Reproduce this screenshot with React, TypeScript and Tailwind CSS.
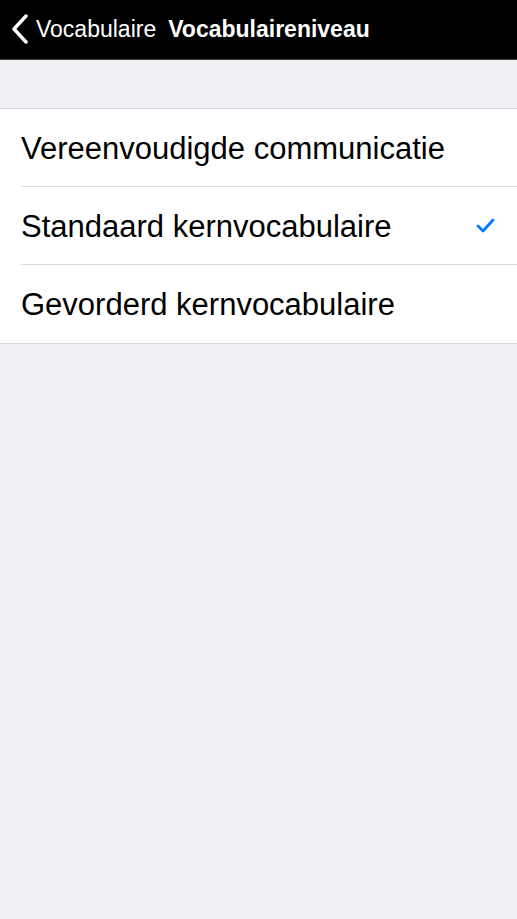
const items = [
  { label: 'Vereenvoudigde communicatie', checked: false },
  { label: 'Standaard kernvocabulaire', checked: true },
  { label: 'Gevorderd kernvocabulaire', checked: false },
];

export default function App() {
  return (
    <div className="min-h-[919px] bg-[#efeff4] font-['Liberation_Sans',Arial,sans-serif]">
      <div className="flex h-[60px] items-center border-b border-[#3a3a3c] bg-black text-white">
        <svg width="18" height="30" viewBox="0 0 18 30" className="ml-[11px] mt-[-1px]">
          <path d="M15 2 L3 15 L15 28" fill="none" stroke="white" strokeWidth="3.4" strokeLinecap="round" strokeLinejoin="round" />
        </svg>
        <span className="ml-[7px] text-[23px]">Vocabulaire</span>
        <span className="ml-[12px] text-[23px] font-bold">Vocabulaireniveau</span>
      </div>
      <div className="mt-[48px] border-y border-[#d8d8dc] bg-white">
        {items.map((item, i) => (
          <div key={item.label} className="pl-[21px]">
            <div
              className={`flex h-[78px] items-center justify-between pr-[22px] pt-[3px] ${
                i < items.length - 1 ? 'border-b border-[#dcdce0]' : ''
              }`}
            >
              <span className="text-[31px] text-black">{item.label}</span>
              {item.checked && (
                <svg width="19" height="15" viewBox="0 0 19 15" className="mt-[-3px]">
                  <path d="M2 8 L7 13 L17 2" fill="none" stroke="#007aff" strokeWidth="2.8" strokeLinecap="round" strokeLinejoin="round" />
                </svg>
              )}
            </div>
          </div>
        ))}
      </div>
    </div>
  );
}
